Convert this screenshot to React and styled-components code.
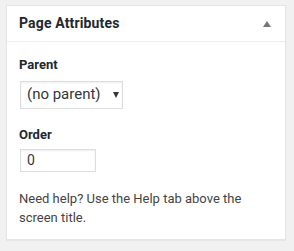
import React from "react";
import styled, { createGlobalStyle } from "styled-components";

const Global = createGlobalStyle`
  html, body { margin: 0; padding: 0; background: #f1f1f1; }
  body { font-family: Roboto, "Liberation Sans", sans-serif; font-size: 13px; line-height: 1.4em; color: #444; }
`;

const Page = styled.div`
  padding: 5px 8px 12px 6px;
`;

const Box = styled.div`
  width: 278px;
  background: #fff;
  border: 1px solid #e5e5e5;
  box-shadow: 0 1px 1px rgba(0, 0, 0, 0.04);
`;

const Header = styled.div`
  display: flex;
  align-items: center;
  justify-content: space-between;
  height: 35px;
  padding: 0 14px 0 12px;
  border-bottom: 1px solid #eee;
`;

const Title = styled.h2`
  margin: 0;
  font-size: 14px;
  font-weight: 700;
  letter-spacing: 0.15px;
  color: #23282d;
  line-height: 1.4;
  padding-top: 1px;
`;

const Toggle = styled.svg`
  width: 8px;
  height: 6px;
  display: block;
  margin-top: 1px;
`;

const Inside = styled.div`
  padding: 13px 12px 12px 12px;
`;

const Label = styled.p`
  margin: 0 0 ${(p) => p.$gap}px 0;
  font-weight: 700;
  color: #23282d;
  line-height: 19.5px;
`;

const SelectBox = styled.div`
  box-sizing: border-box;
  width: 103px;
  height: 28px;
  margin: 1px;
  border: 1px solid #ddd;
  box-shadow: inset 0 1px 2px rgba(0, 0, 0, 0.07);
  display: flex;
  align-items: center;
  padding: 0 3px 0 6px;
  justify-content: space-between;
  color: #32373c;
  font-size: 15px;
`;

const Caret = styled.span`
  width: 0;
  height: 0;
  border-left: 3.5px solid transparent;
  border-right: 3.5px solid transparent;
  border-top: 6px solid #32373c;
  margin-top: 1px;
`;

const Field = styled.div`
  margin: 0 0 ${(p) => p.$after}px 0;
`;

const NumberInput = styled.div`
  box-sizing: border-box;
  width: 76px;
  height: 23px;
  margin: 1px;
  border: 1px solid #ddd;
  box-shadow: inset 0 1px 2px rgba(0, 0, 0, 0.07);
  display: flex;
  align-items: center;
  padding: 0 6px;
  color: #32373c;
  font-size: 14px;
`;

const Help = styled.p`
  margin: 0;
  font-size: 13px;
  line-height: 19px;
  color: #444;
`;

export default function App() {
  return (
    <>
      <Global />
      <Page>
        <Box>
          <Header>
            <Title>Page Attributes</Title>
            <Toggle viewBox="0 0 8 6">
              <polygon points="4,0 8,6 0,6" fill="#72777c" />
            </Toggle>
          </Header>
          <Inside>
            <Label $gap={6}>Parent</Label>
            <Field $after={16}>
              <SelectBox>
                <span>(no parent)</span>
                <Caret />
              </SelectBox>
            </Field>
            <Label $gap={5}>Order</Label>
            <Field $after={17}>
              <NumberInput>0</NumberInput>
            </Field>
            <Help>Need help? Use the Help tab above the screen title.</Help>
          </Inside>
        </Box>
      </Page>
    </>
  );
}
